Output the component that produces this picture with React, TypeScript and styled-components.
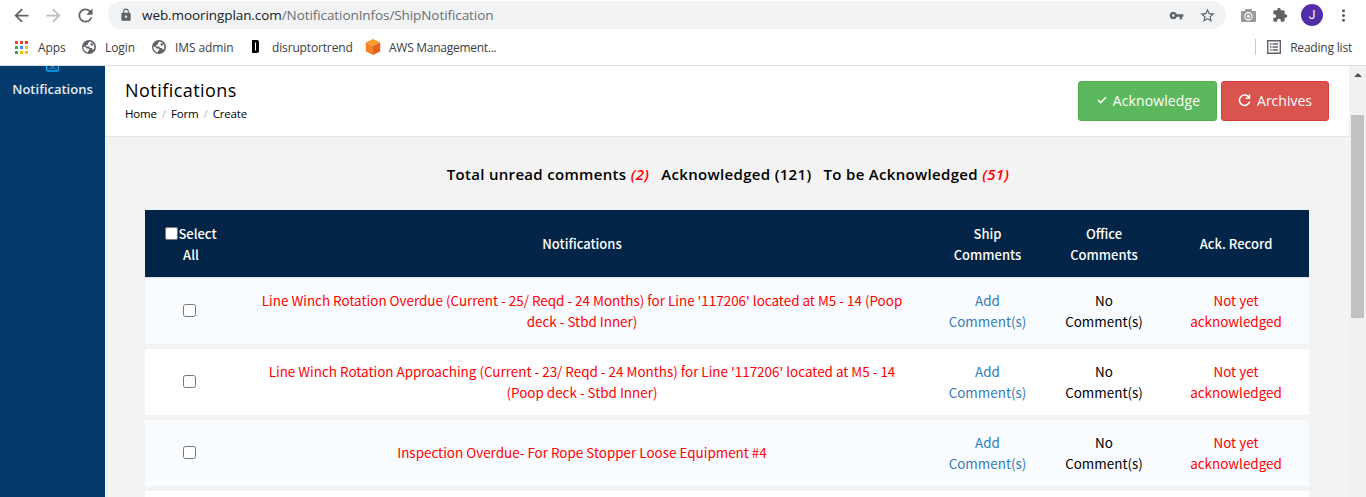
import React from "react";
import styled, { createGlobalStyle, css } from "styled-components";
import {
  MdArrowBack,
  MdArrowForward,
  MdRefresh,
  MdLock,
  MdVpnKey,
  MdStarBorder,
  MdExtension,
  MdMoreVert,
} from "react-icons/md";

const GlobalStyle = createGlobalStyle`
  * { box-sizing: border-box; }
  body { margin: 0; background: #f3f3f3; overflow: hidden; }
`;

const uiFont = `"Open Sans", "Noto Sans", sans-serif`;
const tableFont = `"Noto Sans CJK SC", "Open Sans", sans-serif`;

const Window = styled.div`
  display: flex;
  flex-direction: column;
  width: 1366px;
  height: 497px;
  overflow: hidden;
  font-family: ${uiFont};
  svg { display: block; flex: none; }
`;

const Toolbar = styled.div`
  display: flex;
  align-items: center;
  height: 30px;
  padding: 0 11px;
  background: #fff;
  color: #5f6368;
`;

const NavButtons = styled.div`
  display: flex;
  align-items: center;
  gap: 11px;
  width: 97px;
`;

const AddressBar = styled.div`
  display: flex;
  align-items: center;
  width: 1118px;
  height: 28px;
  padding: 0 10px 0 11px;
  border-radius: 14px;
  background: #f1f3f4;
`;

const Url = styled.div`
  flex: 1;
  margin-left: 9px;
  font-size: 13.5px;
  line-height: 28px;
  letter-spacing: -0.08px;
  color: #6b6e72;
  b { font-weight: 400; color: #202124; }
`;

const AddressActions = styled.div`
  display: flex;
  align-items: center;
  gap: 15px;
`;

const Extensions = styled.div`
  display: flex;
  align-items: center;
  gap: 16px;
  padding-left: 15px;
`;

const Avatar = styled.div`
  width: 22px;
  height: 22px;
  margin: 0 -5px 0 -3px;
  border-radius: 50%;
  background: #512da8;
  color: #fff;
  font: 12px/22px Roboto, sans-serif;
  text-align: center;
`;

const Bookmarks = styled.div`
  display: flex;
  align-items: center;
  height: 36px;
  padding: 0 14px 1px 15px;
  border-bottom: 1px solid #dadce0;
  background: #fff;
  color: #3c4043;
  font-size: 12px;
`;

const Bookmark = styled.div<{ $width: number; $gap: number; $spacing?: number }>`
  display: flex;
  align-items: center;
  gap: ${(p) => p.$gap}px;
  width: ${(p) => p.$width}px;
  letter-spacing: ${(p) => p.$spacing ?? -0.1}px;
  white-space: nowrap;
`;

const ReadingList = styled.div`
  display: flex;
  align-items: center;
  gap: 9px;
  height: 16px;
  margin-left: auto;
  padding-left: 11px;
  border-left: 1px solid #c8cbce;
  letter-spacing: -0.2px;
  white-space: nowrap;
`;

const Page = styled.div`
  display: flex;
  flex: 1;
  min-height: 0;
`;

const Sidebar = styled.nav`
  display: flex;
  flex-direction: column;
  align-items: center;
  width: 105px;
  background: #043a6c;
  color: #e4ebf2;
  font-size: 13px;
  font-weight: 600;
`;

const SidebarLabel = styled.div`
  margin-top: 8px;
  line-height: 18px;
`;

const Main = styled.main`
  flex: 1;
  min-width: 0;
  background: #f3f3f3;
`;

const PageHeader = styled.header`
  display: flex;
  justify-content: space-between;
  height: 71px;
  padding: 15px 20px 0 20px;
  border-bottom: 1px solid #e7e7e7;
  background: #fff;
`;

const Title = styled.h1`
  margin: -3px 0 0;
  font-size: 18px;
  font-weight: 500;
  line-height: 24px;
  letter-spacing: 0.45px;
  color: #000;
`;

const Breadcrumb = styled.div`
  display: flex;
  gap: 5px;
  margin-top: 4px;
  font-size: 11.5px;
  line-height: 16px;
  letter-spacing: -0.15px;
  color: #000;
  i { font-style: normal; color: #bbb; }
`;

const Buttons = styled.div`
  display: flex;
  gap: 4px;
`;

const Button = styled.button<{ $tone: "green" | "red" }>`
  display: flex;
  align-items: center;
  justify-content: center;
  gap: 6px;
  height: 40px;
  padding: 0 0 2px;
  border: 1px solid;
  border-radius: 3px;
  color: #fff;
  font: 14px ${uiFont};
  ${(p) =>
    p.$tone === "green"
      ? css`width: 139px; padding-left: 2px; letter-spacing: 0.1px; background: #5cb85c; border-color: #4cae4c;`
      : css`width: 108px; background: #d9534f; border-color: #d43f3a;`}
`;

const Summary = styled.div`
  display: flex;
  justify-content: center;
  gap: 12px;
  height: 73px;
  padding: 26px 0 0 2px;
  font-size: 15px;
  font-weight: 600;
  line-height: 22px;
  letter-spacing: 0.32px;
  color: #000;
  em { color: #f00; }
`;

const Table = styled.div`
  display: flex;
  flex-direction: column;
  gap: 5px;
  width: 1164px;
  margin: 0 40px;
  font-family: ${tableFont};
  font-size: 13.45px;
  line-height: 21px;
  text-align: center;
`;

const Row = styled.div<{ $striped?: boolean }>`
  display: grid;
  grid-template-columns: 89px 696px 115px 118px 146px;
  align-items: center;
  height: 66px;
  padding-bottom: 1px;
  background: ${(p) => (p.$striped ? "#f9fcff" : "#fff")};
`;

const HeadRow = styled(Row)`
  height: 68px;
  margin-bottom: -5px;
  padding-bottom: 0;
  border-bottom: 1px solid #dee2e6;
  background: #022446;
  color: #fff;
  font-size: 13px;
  font-weight: 500;
`;

const Cell = styled.div<{ $color?: string; $pad?: number }>`
  padding: 0 ${(p) => p.$pad ?? 0}px;
  color: ${(p) => p.$color ?? "inherit"};
`;

const SelectAllCell = styled(Cell)`
  padding: 0 12px 0 15px;
`;

const Checkbox = styled.input.attrs({ type: "checkbox" })`
  display: inline-block;
  width: 13px;
  height: 13px;
  margin: 0;
  vertical-align: -1px;
`;

const Scrollbar = styled.div`
  display: flex;
  flex-direction: column;
  align-items: center;
  width: 17px;
  background: #f1f1f1;
`;

const ScrollArrow = styled.div`
  margin: 7px 0 38px;
  border: 4px solid transparent;
  border-top: 0;
  border-bottom-color: #505050;
`;

const Thumb = styled.div`
  width: 13px;
  height: 203px;
  background: #c1c1c1;
`;

const appColors = ["#ea4335", "#ea4335", "#ea4335", "#34a853", "#4285f4", "#fbbc04", "#34a853", "#fbbc04", "#fbbc04"];

const AppsIcon = () => (
  <svg width="13" height="13" viewBox="0 0 13 13" shapeRendering="crispEdges">
    {appColors.map((c, i) => (
      <rect key={i} x={(i % 3) * 5} y={Math.floor(i / 3) * 5} width="3" height="3" fill={c} />
    ))}
  </svg>
);

const GlobeIcon = () => (
  <svg width="16" height="16" viewBox="0 0 16 16">
    <circle cx="8" cy="8" r="7" fill="#5f6368" />
    <path
      fill="#fff"
      d="M8.600 2.500L7 4.200v1.600H5.400L5 7.400h3.200L9 9h2l.4 1.600h1.200A5.600 5.600 0 0 0 8.600 2.500zM2.400 7.800A5.600 5.600 0 0 0 7 13.500v-1.300L8.400 11l-.8-1.600H5.400L4.200 7.800z"
    />
    <path fill="#5f6368" d="M9.200 4.800l1.600-.9 1.500 2.200-1.500.8z" />
  </svg>
);

const DIcon = () => (
  <svg width="9" height="14" viewBox="0 0 9 14">
    <path fillRule="evenodd" fill="#000" d="M1 0h5a2 2 0 0 1 2 2v9a2 2 0 0 1-2 2H1zM4 2.500v8h1v-8z" />
  </svg>
);

const CubeIcon = () => (
  <svg width="16" height="16" viewBox="0 0 16 16">
    <path d="M8 0l7.200 3.400L8 7 .8 3.400z" fill="#fa9a2b" />
    <path d="M.8 3.400L8 7v9L.8 12.400z" fill="#f58426" />
    <path d="M15.200 3.400L8 7v9l7.200-3.600z" fill="#e7601e" />
  </svg>
);

const CameraIcon = () => (
  <svg width="15" height="13" viewBox="0 0 15 13">
    <path
      fillRule="evenodd"
      fill="#9a9a9a"
      d="M1.200 2H4V1a1 1 0 0 1 1-1h5a1 1 0 0 1 1 1v1h2.800A1.200 1.200 0 0 1 15 3.200v8.600a1.200 1.200 0 0 1-1.200 1.200H1.200A1.200 1.200 0 0 1 0 11.800V3.200A1.200 1.200 0 0 1 1.200 2zM7.500 3a4.200 4.200 0 1 0 0 8.400 4.200 4.200 0 0 0 0-8.400z"
    />
    <circle cx="7.5" cy="7.2" r="3" fill="#9a9a9a" />
    <circle cx="7.5" cy="7.2" r="1.5" fill="#fff" />
  </svg>
);

const ReadingIcon = () => (
  <svg width="14" height="14" viewBox="0 0 14 14" fill="#5f6368">
    <path fillRule="evenodd" d="M0 0h14v14H0zM1.400 1.400v11.200h11.200V1.400z" />
    <path d="M3 3.300h1.500v1.500H3zM5.500 3.300h5.500v1.500H5.500zM3 6.200h1.500v1.500H3zM5.500 6.200h5.500v1.500H5.500zM3 9.200h1.500v1.500H3zM5.500 9.200h5.500v1.500H5.500z" />
  </svg>
);

const BadgeIcon = () => (
  <svg width="13" height="6" viewBox="0 0 13 6" fill="none" stroke="#14a9f5">
    <path d="M.7 0v3.800q0 1.200 1.200 1.200h9.200q1.200 0 1.200-1.200V0" strokeWidth="1.400" />
    <path d="M3 3.500q0-1.500 1.500-1.500h4Q10 2 10 3.500M5 0l1.500 1.300L8 0" />
  </svg>
);

const CheckIcon = () => (
  <svg width="10" height="8" viewBox="0 0 10 8" fill="none" stroke="#fff" strokeWidth="1.600">
    <path d="M1 4l2.600 2.600L9 1.200" />
  </svg>
);

const ReloadIcon = () => (
  <svg width="13" height="13" viewBox="0 0 13 13" fill="none" stroke="#fff" strokeWidth="1.500">
    <path d="M11 3.300A5.200 5.200 0 1 0 11.700 7.500M11.500.5v3.800H7.700" />
  </svg>
);

const notifications = [
  "Line Winch Rotation Overdue (Current - 25/ Reqd - 24 Months) for Line '117206' located at M5 - 14 (Poop deck - Stbd Inner)",
  "Line Winch Rotation Approaching (Current - 23/ Reqd - 24 Months) for Line '117206' located at M5 - 14 (Poop deck - Stbd Inner)",
  "Inspection Overdue- For Rope Stopper Loose Equipment #4",
];

export default function App() {
  return (
    <Window>
      <GlobalStyle />
      <Toolbar>
        <NavButtons>
          <MdArrowBack size={21} />
          <MdArrowForward size={21} color="#bbbdbf" />
          <MdRefresh size={21} />
        </NavButtons>
        <AddressBar>
          <MdLock size={14} />
          <Url>
            <b>web.mooringplan.com</b>/NotificationInfos/ShipNotification
          </Url>
          <AddressActions>
            <MdVpnKey size={15} />
            <MdStarBorder size={17} />
          </AddressActions>
        </AddressBar>
        <Extensions>
          <CameraIcon />
          <MdExtension size={16} />
          <Avatar>J</Avatar>
          <MdMoreVert size={19} />
        </Extensions>
      </Toolbar>
      <Bookmarks>
        <Bookmark $width={66} $gap={10}>
          <AppsIcon />
          Apps
        </Bookmark>
        <Bookmark $width={70} $gap={8}>
          <GlobeIcon />
          Login
        </Bookmark>
        <Bookmark $width={100} $gap={8}>
          <GlobeIcon />
          IMS admin
        </Bookmark>
        <Bookmark $width={114} $gap={12} $spacing={-0.15}>
          <DIcon />
          disruptortrend
        </Bookmark>
        <Bookmark $width={140} $gap={8} $spacing={-0.27}>
          <CubeIcon />
          AWS Management...
        </Bookmark>
        <ReadingList>
          <ReadingIcon />
          Reading list
        </ReadingList>
      </Bookmarks>
      <Page>
        <Sidebar>
          <BadgeIcon />
          <SidebarLabel>Notifications</SidebarLabel>
        </Sidebar>
        <Main>
          <PageHeader>
            <div>
              <Title>Notifications</Title>
              <Breadcrumb>
                <span>Home</span>
                <i>/</i>
                <span>Form</span>
                <i>/</i>
                <span>Create</span>
              </Breadcrumb>
            </div>
            <Buttons>
              <Button $tone="green">
                <CheckIcon />
                Acknowledge
              </Button>
              <Button $tone="red">
                <ReloadIcon />
                Archives
              </Button>
            </Buttons>
          </PageHeader>
          <Summary>
            <span>
              Total unread comments <em>(2)</em>
            </span>
            <span>Acknowledged (121)</span>
            <span>
              To be Acknowledged <em>(51)</em>
            </span>
          </Summary>
          <Table>
            <HeadRow>
              <SelectAllCell>
                <Checkbox />
                Select All
              </SelectAllCell>
              <Cell>Notifications</Cell>
              <Cell $pad={18}>Ship Comments</Cell>
              <Cell $pad={18}>Office Comments</Cell>
              <Cell>Ack. Record</Cell>
            </HeadRow>
            {notifications.map((text, i) => (
              <Row key={text} $striped={i % 2 === 0}>
                <Cell>
                  <Checkbox />
                </Cell>
                <Cell $color="#f00" $pad={20}>{text}</Cell>
                <Cell $color="#337ab7" $pad={15}>Add Comment(s)</Cell>
                <Cell $color="#000" $pad={15}>No Comment(s)</Cell>
                <Cell $color="#f00" $pad={24}>Not yet acknowledged</Cell>
              </Row>
            ))}
            <Row />
          </Table>
        </Main>
        <Scrollbar>
          <ScrollArrow />
          <Thumb />
        </Scrollbar>
      </Page>
    </Window>
  );
}
